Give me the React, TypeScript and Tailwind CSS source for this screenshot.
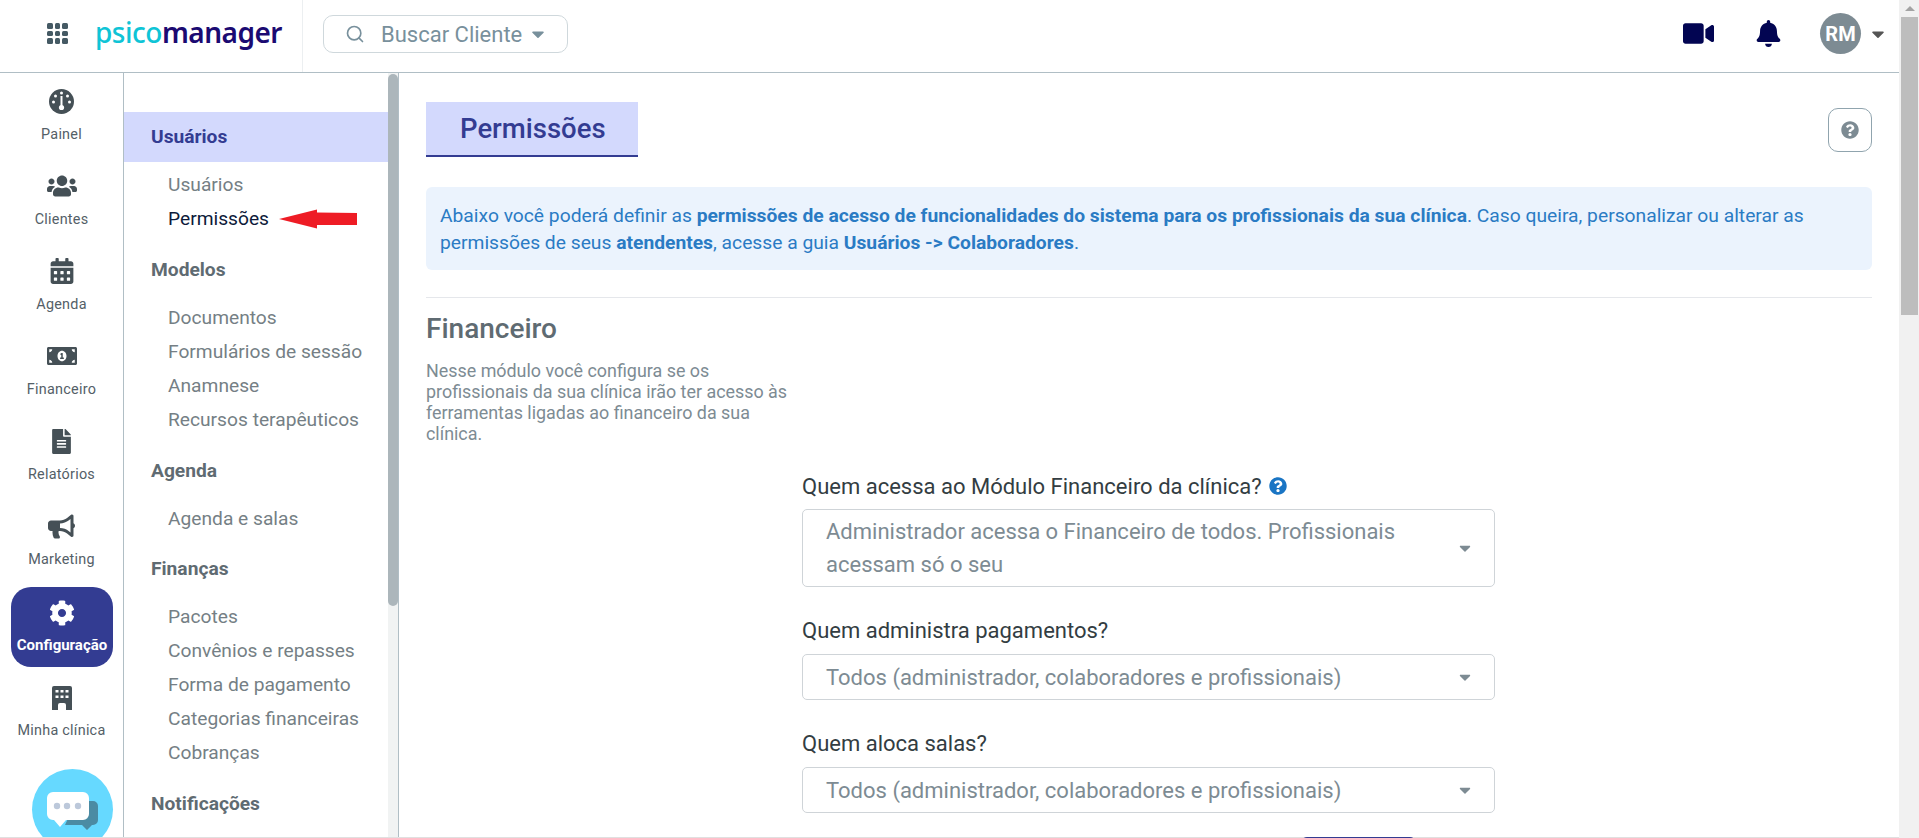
import {
    FaBell,
    FaBullhorn,
    FaCalendarAlt,
    FaCaretDown,
    FaCog,
    FaFileAlt,
    FaMoneyBillAlt,
    FaQuestionCircle,
    FaUsers,
    FaVideo,
} from "react-icons/fa"
import { Search } from "lucide-react"
import type { ReactNode } from "react"

const DialIcon = () => (
    <svg viewBox="0 0 25 25" className="w-[25px] h-[25px]">
        <circle cx="12.5" cy="12.5" r="12.5" fill="currentColor" />
        <circle cx="12.5" cy="4" r="1.5" fill="#fff" />
        <circle cx="6.5" cy="7" r="1.5" fill="#fff" />
        <circle cx="18.5" cy="7" r="1.5" fill="#fff" />
        <circle cx="4.5" cy="13" r="1.5" fill="#fff" />
        <circle cx="20.5" cy="13" r="1.5" fill="#fff" />
        <rect x="11.5" y="7" width="2" height="11" fill="#fff" />
        <circle cx="12.5" cy="18.5" r="2.6" fill="#fff" />
    </svg>
)

const ClinicIcon = () => (
    <svg viewBox="0 0 20 24" className="w-[20px] h-[24px]">
        <path
            d="M2 0h16a2 2 0 0 1 2 2v22h-6v-5a2 2 0 0 0-2-2H8a2 2 0 0 0-2 2v5H0V2a2 2 0 0 1 2-2z"
            fill="currentColor"
        />
        <g fill="#fff">
            <rect x="3.5" y="4" width="3" height="2.5" />
            <rect x="8.5" y="4" width="3" height="2.5" />
            <rect x="13.5" y="4" width="3" height="2.5" />
            <rect x="3.5" y="9.5" width="3" height="2.5" />
            <rect x="8.5" y="9.5" width="3" height="2.5" />
            <rect x="13.5" y="9.5" width="3" height="2.5" />
        </g>
    </svg>
)

const railItems = [
    { label: "Painel", icon: <DialIcon /> },
    { label: "Clientes", icon: <FaUsers size={30} /> },
    { label: "Agenda", icon: <FaCalendarAlt size={26} /> },
    { label: "Financeiro", icon: <FaMoneyBillAlt size={30} /> },
    { label: "Relatórios", icon: <FaFileAlt size={25} /> },
    { label: "Marketing", icon: <FaBullhorn size={27} /> },
]

const menu = [
    { title: "Modelos", items: ["Documentos", "Formulários de sessão", "Anamnese", "Recursos terapêuticos"] },
    { title: "Agenda", items: ["Agenda e salas"] },
    { title: "Finanças", items: ["Pacotes", "Convênios e repasses", "Forma de pagamento", "Categorias financeiras", "Cobranças"] },
]

const Grid = () => (
    <div className="grid grid-cols-3 gap-[2px] w-[21px] h-[21px] ml-[47px]">
        {Array.from({ length: 9 }).map((_, i) => (
            <div key={i} className="rounded-[1.5px] bg-[#455a64]" />
        ))}
    </div>
)

const Header = () => (
    <div className="flex items-center h-[73px] border-b border-[#b0bec5]">
        <div className="flex items-center w-[303px] h-full border-r border-[#eceff1] shrink-0">
            <div className="flex items-center mb-[5px]">
                <Grid />
                <div className="ml-[27px] text-[28px] tracking-[-0.5px] leading-none font-['Noto_Sans',sans-serif] pb-[3px]">
                    <span className="text-[#0fc4d6] font-medium">psico</span>
                    <span className="text-[#1b0a72] font-semibold">manager</span>
                </div>
            </div>
        </div>
        <div className="flex items-center ml-[20px] mb-[4px] w-[245px] h-[38px] rounded-[10px] border border-[#cfd8dc] text-[#78909c]">
            <Search size={20} className="ml-[21px]" />
            <span className="ml-[16px] text-[22px]">Buscar Cliente</span>
            <FaCaretDown size={20} className="ml-[6px]" />
        </div>
        <div className="flex items-center ml-auto mb-[5px] text-[#020552]">
            <FaVideo size={31} />
            <FaBell size={27} className="ml-[41px]" />
            <div className="flex items-center justify-center ml-[38px] w-[41px] h-[41px] rounded-full bg-[#7d8b93] text-white font-bold text-[20px]">
                RM
            </div>
            <FaCaretDown size={20} className="ml-[7px] mr-[11px] text-[#555]" />
        </div>
    </div>
)

const RailItem = ({ icon, label }: { icon: ReactNode; label: string }) => (
    <div className="flex flex-col items-center h-[85px] shrink-0 text-[#546067]">
        <div className="flex items-center justify-center h-[32px] mt-[11px] text-[#455056]">{icon}</div>
        <span className="mt-[8px] text-[14.4px] leading-[20px] tracking-[0.25px]">{label}</span>
    </div>
)

const Rail = () => (
    <div className="flex flex-col w-[124px] shrink-0 border-r border-[#b0bec5] pt-[1px] overflow-hidden">
        {railItems.map((item) => (
            <RailItem key={item.label} {...item} />
        ))}
        <div className="flex flex-col items-center mx-[11px] w-[102px] h-[80px] shrink-0 mt-[3px] rounded-[20px] bg-[#333c92] text-white">
            <FaCog size={26} className="mt-[13px]" />
            <span className="mt-[9px] text-[15px] leading-[20px] font-bold">Configuração</span>
        </div>
        <div className="flex flex-col items-center h-[85px] shrink-0 text-[#546067]">
            <div className="flex items-center justify-center h-[32px] mt-[15px] text-[#455056]">
                <ClinicIcon />
            </div>
            <span className="mt-[7px] text-[14.4px] leading-[20px] tracking-[0.25px]">Minha clínica</span>
        </div>
        <div className="ml-[32px] mt-[17px] w-[81px] h-[81px] shrink-0 rounded-full bg-[#66d9ff]">
            <svg viewBox="0 0 81 81" className="w-[81px] h-[81px]">
                <path d="M44 32h17a5 5 0 0 1 5 5v14a5 5 0 0 1-5 5h-1l-5 5-5-5H33z" fill="#4b8ba3" />
                <path d="M21 23h30a6 6 0 0 1 6 6v16a6 6 0 0 1-6 6H34l-6 7-6-7h-1a6 6 0 0 1-6-6V29a6 6 0 0 1 6-6z" fill="#fff" />
                <circle cx="25" cy="37" r="3.2" fill="#bcc8da" />
                <circle cx="35" cy="37" r="3.2" fill="#bcc8da" />
                <circle cx="46" cy="37" r="3.2" fill="#bcc8da" />
            </svg>
        </div>
    </div>
)

const RedArrow = () => (
    <svg viewBox="0 0 78 20" className="w-[78px] h-[20px] ml-[10px]">
        <path d="M0 10 L38 0.5 L38 3.5 L78 4 L78 16 L38 16 L38 19.5 Z" fill="#ee1c25" />
    </svg>
)

const SideMenu = () => (
    <div className="flex w-[275px] shrink-0 border-r border-[#b0bec5]">
        <div className="flex flex-col w-[264px] shrink-0 pt-[39px]">
            <div className="flex items-center h-[50px] pl-[27px] bg-[#d3d9fd] text-[#333c92] font-bold text-[19.2px]">
                Usuários
            </div>
            <div className="flex flex-col pl-[44px] pt-[6px] pb-[1px] text-[#757f85] text-[19.2px]">
                <div className="flex items-center h-[34px]">Usuários</div>
                <div className="flex items-center h-[34px] text-[#0d1a3a]">
                    Permissões
                    <RedArrow />
                </div>
            </div>
            {menu.map((group) => (
                <div key={group.title} className="flex flex-col">
                    <div className="flex items-center h-[34px] mt-[16.5px] pl-[27px] text-[#5f6b72] font-bold text-[19.2px]">
                        {group.title}
                    </div>
                    <div className="flex flex-col pl-[44px] pt-[14px] text-[#757f85] text-[19.2px]">
                        {group.items.map((item) => (
                            <div key={item} className="flex items-center h-[34px]">
                                {item}
                            </div>
                        ))}
                    </div>
                </div>
            ))}
            <div className="flex items-center h-[34px] mt-[16.5px] pl-[27px] text-[#5f6b72] font-bold text-[19.2px]">
                Notificações
            </div>
        </div>
        <div className="flex-1 bg-[#f1f3f3] pt-[1px]">
            <div className="h-[532px] rounded-[5px] bg-[#acb6bb]" />
        </div>
    </div>
)

const Select = ({ lines }: { lines: string[] }) => (
    <div
        className={`flex items-center w-[693px] rounded-[5px] border border-[#cfd4d8] pl-[23px] pr-[20px] text-[#7d8b93] text-[22px] leading-[33px] ${
            lines.length > 1 ? "h-[78px]" : "h-[46px]"
        }`}
    >
        <div className="flex-1">
            {lines.map((line) => (
                <div key={line}>{line}</div>
            ))}
        </div>
        <FaCaretDown size={18} />
    </div>
)

const Main = () => (
    <div className="flex-1 min-w-0 px-[27px] pt-[29px]">
        <div className="flex items-start justify-between">
            <div className="flex items-center w-[212px] h-[55px] pl-[34px] bg-[#d3d9fd] border-b-2 border-[#333c92] text-[#333c92] text-[27.5px] font-medium">
                Permissões
            </div>
            <div className="flex items-center justify-center mt-[6px] w-[44px] h-[44px] rounded-[10px] border border-[#90a4ae] text-[#7d8b93]">
                <FaQuestionCircle size={18} />
            </div>
        </div>
        <div className="mt-[30px] h-[83px] rounded-[6px] bg-[#ebf3fd] px-[14px] pt-[15px] text-[#2a7bc4] text-[19.25px] leading-[27px]">
            Abaixo você poderá definir as{" "}
            <b className="font-bold">
                permissões de acesso de funcionalidades do sistema para os profissionais da sua clínica
            </b>
            . Caso queira, personalizar ou alterar as permissões de seus <b className="font-bold">atendentes</b>, acesse a
            guia <b className="font-bold">Usuários -&gt; Colaboradores</b>.
        </div>
        <div className="mt-[27px] border-t border-[#e5e7eb]" />
        <h2 className="mt-[14px] text-[28px] leading-[34px] font-medium text-[#5f6b72]">Financeiro</h2>
        <p className="mt-[14px] w-[366px] text-[17.9px] leading-[21px] text-[#7d8b93]">
            Nesse módulo você configura se os profissionais da sua clínica irão ter acesso às ferramentas ligadas ao
            financeiro da sua clínica.
        </p>
        <div className="flex flex-col ml-[376px] mt-[30px] text-[#333d42] text-[22px]">
            <div className="flex items-center gap-[7px] h-[24px] mb-[11px]">
                Quem acessa ao Módulo Financeiro da clínica?
                <FaQuestionCircle size={18} className="text-[#1a75c4]" />
            </div>
            <Select lines={["Administrador acessa o Financeiro de todos. Profissionais", "acessam só o seu"]} />
            <div className="flex items-center h-[24px] mt-[31px] mb-[12px]">Quem administra pagamentos?</div>
            <Select lines={["Todos (administrador, colaboradores e profissionais)"]} />
            <div className="flex items-center h-[24px] mt-[31px] mb-[12px]">Quem aloca salas?</div>
            <Select lines={["Todos (administrador, colaboradores e profissionais)"]} />
            <div className="flex mt-[24px] ml-[499px] w-[115px] h-[30px] rounded-t-[6px] border-t-2 border-x border-[#333c92] overflow-hidden">
                <div className="w-[58px] bg-[#333c92]" />
            </div>
        </div>
    </div>
)

const PageScrollbar = () => (
    <div className="flex flex-col w-[20px] shrink-0 bg-[#f1f1f1]">
        <div className="flex items-center justify-center h-[17px] pl-[1px]">
            <div className="w-0 h-0 border-x-[5px] border-x-transparent border-b-[5px] border-b-[#a3a3a3]" />
        </div>
        <div className="h-[298px] ml-[2px] mr-[1px] bg-[#bdbdbd]" />
    </div>
)

export default function App() {
    return (
        <div className="flex w-full h-[838px] overflow-hidden bg-white font-['Roboto',sans-serif]">
            <div className="flex flex-col flex-1 min-w-0">
                <Header />
                <div className="flex flex-1 min-h-0 border-b border-[#e0e0e0]">
                    <Rail />
                    <SideMenu />
                    <Main />
                </div>
            </div>
            <PageScrollbar />
        </div>
    )
}
